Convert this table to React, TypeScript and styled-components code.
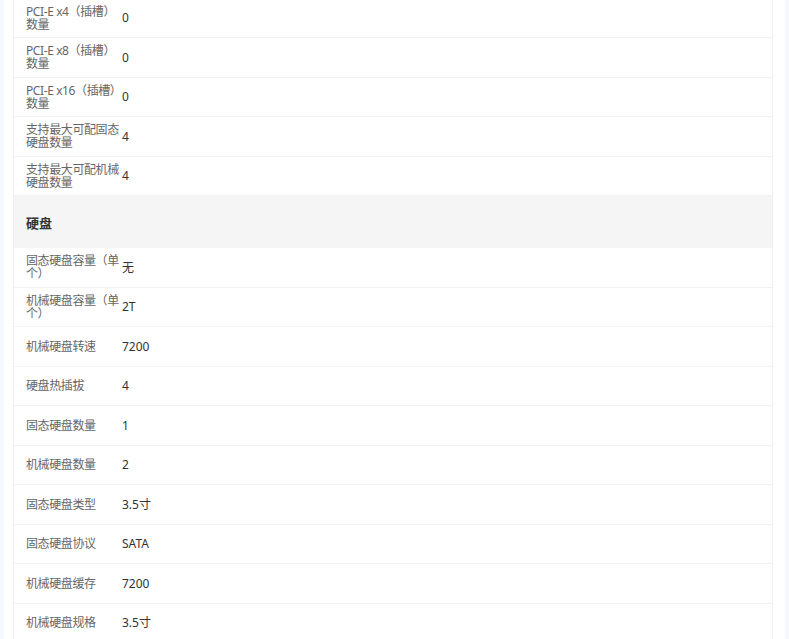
import React from "react";
import styled, { createGlobalStyle } from "styled-components";

const GlobalStyle = createGlobalStyle`
  html, body {
    margin: 0;
    padding: 0;
    background: #f5f8fd;
    font-family: "Noto Sans", "Noto Sans CJK SC", sans-serif;
    overflow: hidden;
  }
`;

const Panel = styled.div`
  margin: 0 4px;
  padding: 0 12px 0 9px;
  background: #ffffff;
  min-height: 639px;
`;

const Card = styled.div`
  margin-top: -1.5px;
  border-left: 1px solid #eceef2;
  border-right: 1px solid #eceef2;
`;

const Row = styled.div`
  display: flex;
  align-items: center;
  box-sizing: border-box;
  height: 39.5px;
  padding-left: 12px;
  border-bottom: 1px solid #f2f2f2;
  font-size: 12px;
`;

const Label = styled.div`
  width: 96px;
  flex-shrink: 0;
  color: #666666;
  line-height: 13px;
  letter-spacing: -0.4px;
`;

const Value = styled.div`
  color: #333333;
  line-height: 13px;
`;

const SectionHeader = styled.div`
  display: flex;
  align-items: center;
  box-sizing: border-box;
  height: 52px;
  padding-left: 12px;
  background: #f5f5f5;
  color: #333333;
  font-size: 13px;
  font-weight: 700;
`;

type Spec = { label: string; value: string };

const slots: Spec[] = [
  { label: "PCI-E x4（插槽）数量", value: "0" },
  { label: "PCI-E x8（插槽）数量", value: "0" },
  { label: "PCI-E x16（插槽）数量", value: "0" },
  { label: "支持最大可配固态硬盘数量", value: "4" },
  { label: "支持最大可配机械硬盘数量", value: "4" },
];

const disks: Spec[] = [
  { label: "固态硬盘容量（单个）", value: "无" },
  { label: "机械硬盘容量（单个）", value: "2T" },
  { label: "机械硬盘转速", value: "7200" },
  { label: "硬盘热插拔", value: "4" },
  { label: "固态硬盘数量", value: "1" },
  { label: "机械硬盘数量", value: "2" },
  { label: "固态硬盘类型", value: "3.5寸" },
  { label: "固态硬盘协议", value: "SATA" },
  { label: "机械硬盘缓存", value: "7200" },
  { label: "机械硬盘规格", value: "3.5寸" },
];

const SpecRow: React.FC<Spec> = ({ label, value }) => (
  <Row>
    <Label>{label}</Label>
    <Value>{value}</Value>
  </Row>
);

export default function App() {
  return (
    <>
      <GlobalStyle />
      <Panel>
        <Card>
          {slots.map((s) => (
            <SpecRow key={s.label} {...s} />
          ))}
          <SectionHeader>硬盘</SectionHeader>
          {disks.map((s) => (
            <SpecRow key={s.label} {...s} />
          ))}
        </Card>
      </Panel>
    </>
  );
}
